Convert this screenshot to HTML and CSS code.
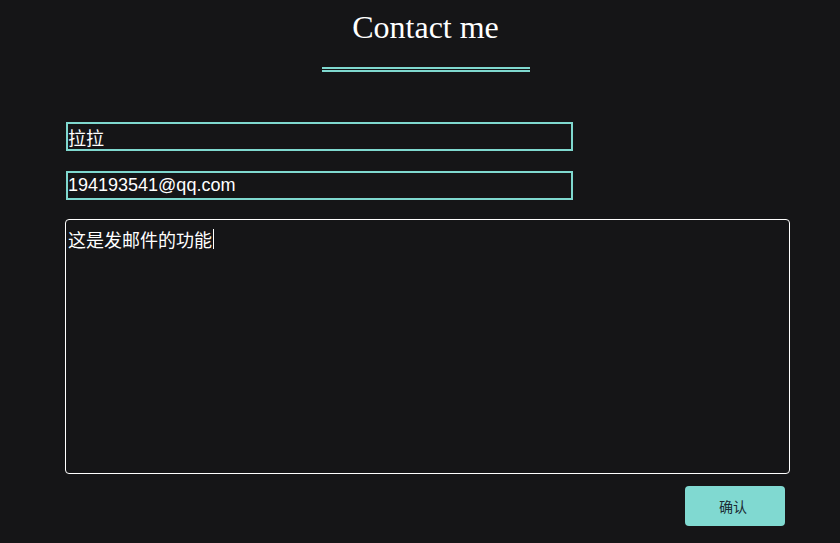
FILE: index.html
```html
<!DOCTYPE html>
<html lang="zh">
<head>
<meta charset="utf-8">
<title>Contact me</title>
<link rel="stylesheet" href="styles.css">
</head>
<body>
<div class="page">
  <header class="head">
    <h1 class="title">Contact me</h1>
    <div class="rule"></div>
  </header>
  <form class="form">
    <input class="field" type="text" value="拉拉">
    <input class="field field-second" type="text" value="194193541@qq.com">
    <div class="area"><span class="area-text">这是发邮件的功能</span><span class="caret"></span></div>
    <div class="actions"><button class="btn" type="button">确认</button></div>
  </form>
</div>
</body>
</html>
```
FILE: styles.css
```css
html, body {
  margin: 0;
  padding: 0;
  background: #151517;
}
body {
  font-family: "Liberation Sans", "Noto Sans CJK SC", sans-serif;
  color: #ffffff;
}
.page {
  width: 720px;
  margin-left: 65px;
  padding-top: 9px;
}
.head {
  display: flex;
  flex-direction: column;
  align-items: center;
  margin-left: 1px;
}
.title {
  margin: 0;
  font-family: "Liberation Serif", serif;
  font-weight: normal;
  font-size: 32px;
  line-height: 36px;
  color: #ffffff;
}
.rule {
  width: 208px;
  height: 1px;
  margin-top: 22px;
  border-top: 2px solid #7fd8cf;
  border-bottom: 2px solid #7fd8cf;
}
.form {
  display: flex;
  flex-direction: column;
  margin-top: 50px;
}
.field {
  box-sizing: border-box;
  width: 507px;
  height: 29px;
  margin: 0 0 0 1px;
  padding: 0;
  border: 2px solid #7fd8cf;
  background: transparent;
  color: #ffffff;
  font-family: "Liberation Sans", "Noto Sans CJK SC", sans-serif;
  font-size: 18px;
  outline: none;
}
.field-second {
  margin-top: 20px;
}
.area {
  box-sizing: border-box;
  width: 725px;
  height: 255px;
  margin-top: 19px;
  padding: 9px 2px 0 2px;
  border: 1px solid #ffffff;
  border-radius: 4px;
  font-family: "Noto Sans CJK SC", sans-serif;
  font-size: 18px;
  line-height: 20px;
  display: flex;
  align-items: flex-start;
}
.caret {
  display: inline-block;
  width: 1px;
  height: 20px;
  background: #ffffff;
  margin-left: 1px;
}
.actions {
  display: flex;
  justify-content: flex-end;
  margin-top: 12px;
}
.btn {
  width: 100px;
  height: 40px;
  border: none;
  border-radius: 4px;
  background: #80d9d1;
  color: #1b2b33;
  font-family: "Noto Sans CJK SC", sans-serif;
  font-size: 14px;
  padding: 0 4px 0 0;
}
```
